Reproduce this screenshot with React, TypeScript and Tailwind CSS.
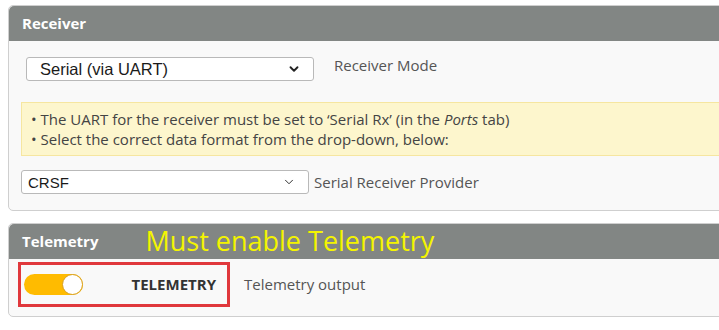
import { ChevronDown } from 'lucide-react';

/* ─── Fake select box ─────────────────────────────────── */
function SelectBox({ value, size, bold, textPad }: { value: string; size: string; bold?: boolean; textPad: string }) {
  return (
    <div
      className={`w-[288px] h-6 flex items-center justify-between border border-[#b9b9b9] rounded-[3px] bg-white ${textPad} pr-[12px] shrink-0`}
    >
      <span className={`${size} text-[#1a1a1a] font-['Liberation_Sans',Arial,sans-serif] leading-none`}>{value}</span>
      <ChevronDown className="w-[14px] h-[14px] text-[#222]" strokeWidth={bold ? 3.2 : 1.6} />
    </div>
  );
}

/* ─── Panel header ────────────────────────────────────── */
function PanelHead({ title, children }: { title: string; children?: React.ReactNode }) {
  return (
    <div className="h-[35px] bg-[#828684] rounded-t-[5px] flex items-center pl-[13px]">
      <span className="text-[15px] font-bold text-white">{title}</span>
      {children}
    </div>
  );
}

export default function App() {
  return (
    <div className="w-[719px] h-[330px] overflow-hidden bg-white pl-2 pt-[5px] font-['Open_Sans',sans-serif]">
      {/* ── Receiver ─────────────────────────────────── */}
      <div className="w-[740px] border border-[#cfcfcf] rounded-[5px] bg-[#f9f9f9]">
        <PanelHead title="Receiver" />
        <div className="pt-[16px] pl-[17px] flex items-start gap-5">
          <SelectBox value="Serial (via UART)" size="text-[16.5px]" bold textPad="pl-[13px]" />
          <span className="text-[15px] text-[#555] mt-[-3px]">Receiver Mode</span>
        </div>
        <div className="ml-[12px] mt-[21px] border border-[#f6e6a0] bg-[#fdf6cd] px-[9px] py-[6px] text-[15px] leading-[20px] text-[#444]">
          <p>• The UART for the receiver must be set to ‘Serial Rx’ (in the <em>Ports</em> tab)</p>
          <p>• Select the correct data format from the drop-down, below:</p>
        </div>
        <div className="mt-[14px] pl-[12px] pb-[16px] flex items-center gap-[5px]">
          <SelectBox value="CRSF" size="text-[15px]" textPad="pl-[6px]" />
          <span className="text-[15px] text-[#555]">Serial Receiver Provider</span>
        </div>
      </div>

      {/* ── Telemetry ────────────────────────────────── */}
      <div className="mt-[12px] w-[740px] border border-[#cfcfcf] rounded-[5px] bg-[#f9f9f9]">
        <PanelHead title="Telemetry">
          <span className="ml-[47px] text-[27px] leading-none text-[#f4f400] mt-[-3px]">Must enable Telemetry</span>
        </PanelHead>
        <div className="pt-[3px] pb-[9px] pl-[9px] flex items-center">
          <div className="w-[212px] h-[45px] border-[3px] border-[#e0383c] flex items-center pl-[3px]">
            <div className="w-[59px] h-[21px] rounded-full bg-[#ffbb00] flex items-center justify-end">
              <div className="w-[21px] h-[21px] rounded-full bg-white border border-[#d8a020]" />
            </div>
            <span className="ml-auto mr-[11px] text-[15px] font-bold text-[#333]">TELEMETRY</span>
          </div>
          <span className="ml-[14px] text-[15px] text-[#555]">Telemetry output</span>
        </div>
      </div>
    </div>
  );
}
